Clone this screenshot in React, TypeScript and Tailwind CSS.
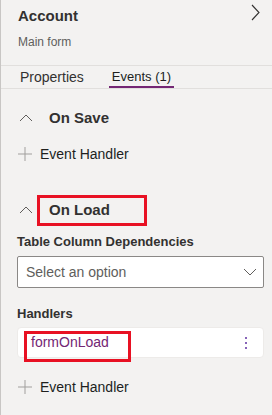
const font = { fontFamily: '"Segoe UI", "Liberation Sans", Arial, sans-serif' };

function ChevronUpIcon() {
  return (
    <svg width="14" height="8" viewBox="0 0 14 8" className="ml-[18px]" fill="none">
      <path d="M1 7l6-6 6 6" stroke="#605e5c" strokeWidth="1" />
    </svg>
  );
}

function PlusIcon() {
  return (
    <svg width="16" height="16" viewBox="0 0 16 16" fill="none">
      <path d="M8 1v14M1 8h14" stroke="#a19f9d" strokeWidth="1" />
    </svg>
  );
}

function SectionHeader({ title, boxed }: { title: string; boxed?: boolean }) {
  return (
    <div className="relative flex h-[28px] items-center">
      <ChevronUpIcon />
      <span className="ml-[16px] text-[15px] font-semibold text-[#323130]">{title}</span>
      {boxed && (
        <div className="absolute left-[36px] top-[-1px] h-[31px] w-[110px] border-[3px] border-[#e81123]" />
      )}
    </div>
  );
}

function AddHandler() {
  return (
    <div className="flex h-[20px] items-center pl-[16px]">
      <PlusIcon />
      <span className="ml-[7px] text-[14px] text-[#201f1e]">Event Handler</span>
    </div>
  );
}

export default function App() {
  return (
    <div style={font} className="h-[415px] w-[272px] overflow-hidden border-l border-[#c8c6c4] bg-[#f3f2f1]">
      <div className="flex h-[27px] items-end justify-between pl-[17px] pr-[12px]">
        <span className="text-[15px] font-semibold leading-[22px] text-[#323130]">Account</span>
        <svg width="9" height="17" viewBox="0 0 9 17" fill="none" className="mb-[6px]">
          <path d="M1 1l7 7.5L1 16" stroke="#323130" strokeWidth="1.1" />
        </svg>
      </div>
      <div className="mt-[7px] pl-[17px] text-[12px] leading-[16px] text-[#605e5c]">Main form</div>

      <div className="mt-[15px] flex h-[24px] border-y border-[#e1dfdd]">
        <div className="ml-[19px] flex items-center text-[14px] text-[#323130]">Properties</div>
        <div className="relative ml-[25px] flex items-center px-[3px] text-[13px] text-[#201f1e]">
          Events (1)
          <div className="absolute bottom-0 left-0 right-0 h-[2px] bg-[#742774]" />
        </div>
      </div>

      <div className="mt-[15px]">
        <SectionHeader title="On Save" />
      </div>
      <div className="mt-[12px]">
        <AddHandler />
      </div>

      <div className="mt-[32px]">
        <SectionHeader title="On Load" boxed />
      </div>

      <div className="mt-[8px] pl-[16px] text-[13px] font-semibold leading-[20px] text-[#323130]">
        Table Column Dependencies
      </div>
      <div className="ml-[16px] mt-[4px] flex h-[32px] w-[247px] items-center justify-between rounded-[2px] border border-[#8a8886] bg-white pl-[8px] pr-[6px]">
        <span className="text-[14px] text-[#605e5c]">Select an option</span>
        <svg width="14" height="8" viewBox="0 0 14 8" fill="none">
          <path d="M1 1l6 6 6-6" stroke="#605e5c" strokeWidth="1" />
        </svg>
      </div>

      <div className="mt-[16px] pl-[16px] text-[13px] font-semibold leading-[20px] text-[#323130]">Handlers</div>
      <div className="relative ml-[16px] mt-[3px] flex h-[31px] w-[247px] items-center justify-between rounded-[4px] border border-[#edebe9] bg-white pl-[13px] pr-[16px]">
        <span className="text-[14px] text-[#742774]">formOnLoad</span>
        <div className="flex flex-col gap-[3px]">
          <div className="h-[2px] w-[2px] bg-[#8764b8]" />
          <div className="h-[2px] w-[2px] bg-[#8764b8]" />
          <div className="h-[2px] w-[2px] bg-[#8764b8]" />
        </div>
        <div className="absolute left-[6px] top-[3px] h-[31px] w-[107px] border-[3px] border-[#e81123]" />
      </div>

      <div className="mt-[19px]">
        <AddHandler />
      </div>
    </div>
  );
}
